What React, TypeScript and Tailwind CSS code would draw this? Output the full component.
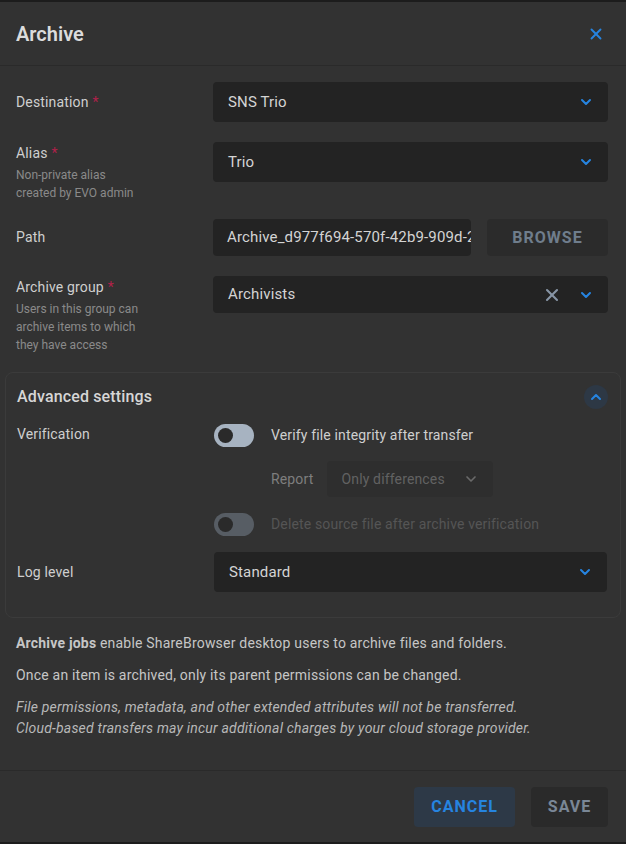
import { ChevronDown, ChevronUp, X } from 'lucide-react'

const font = { fontFamily: 'Roboto, "Liberation Sans", sans-serif' }

function Required() {
  return <span className="ml-1 text-[#b0214a]">*</span>
}

function SelectBox({ value, clearable, tall = true }: { value: string; clearable?: boolean; tall?: boolean }) {
  return (
    <div
      className={`flex flex-1 items-center rounded-[4px] bg-[#232323] pl-[15px] pr-[14px] text-[15px] tracking-[0.15px] text-[#d4d4d4] ${
        tall ? 'h-10' : 'h-[37px]'
      }`}
    >
      <span className="flex-1">{value}</span>
      {clearable && <X className="mr-[16px] h-5 w-5 text-[#8795a5]" strokeWidth={2.5} />}
      <ChevronDown className="h-4 w-4 text-[#2684e0]" strokeWidth={3} />
    </div>
  )
}

function Toggle({ dim }: { dim?: boolean }) {
  return (
    <div
      className={`flex h-[23px] w-10 items-center rounded-full pl-[4px] ${
        dim ? 'bg-[#575d64]' : 'bg-[#a7b3c1]'
      }`}
    >
      <div className="h-[15px] w-[15px] rounded-full bg-[#2a2a2a]" />
    </div>
  )
}

export default function App() {
  return (
    <div className="h-[844px] w-[626px] bg-[#1c1c1c] pt-[2px]" style={font}>
      <div className="flex h-[840px] flex-col bg-[#323232]">
        <div className="flex h-[64px] items-center justify-between border-b border-[#2a2a2a] pl-4 pr-[18px]">
          <h1 className="text-[20px] font-semibold text-[#dcdcdc]">Archive</h1>
          <X className="mr-[3px] h-[18px] w-[18px] text-[#2684e0]" strokeWidth={2.5} />
        </div>

        <div className="flex flex-col pl-4 pr-[18px] pt-[16px]">
          <div className="flex items-center">
            <div className="w-[197px] text-[14px] tracking-[0.15px] text-[#cfcfcf]">
              Destination
              <Required />
            </div>
            <SelectBox value="SNS Trio" />
          </div>

          <div className="mt-5 flex items-start">
            <div className="w-[197px] pt-[1px]">
              <div className="text-[14px] tracking-[0.15px] text-[#cfcfcf]">
                Alias
                <Required />
              </div>
              <div className="mt-[2px] text-[12px] leading-[18px] text-[#8a8a8a]">
                Non-private alias
                <br />
                created by EVO admin
              </div>
            </div>
            <SelectBox value="Trio" />
          </div>

          <div className="mt-[17px] flex items-center">
            <div className="w-[197px] text-[14px] tracking-[0.15px] text-[#cfcfcf]">Path</div>
            <div className="flex h-[37px] w-[258px] items-center overflow-hidden whitespace-nowrap rounded-[4px] bg-[#232323] pl-[14px] pr-1 text-[15px] tracking-[0.15px] text-[#d4d4d4]">
              Archive_d977f694-570f-42b9-909d-2c1
            </div>
            <button className="ml-4 flex h-[37px] flex-1 items-center justify-center rounded-[4px] bg-[#2b2b2b] text-[16px] font-bold tracking-[1px] text-[#6f7d8c]">
              BROWSE
            </button>
          </div>

          <div className="mt-5 flex items-start">
            <div className="w-[197px] pt-[1px]">
              <div className="text-[14px] tracking-[0.15px] text-[#cfcfcf]">
                Archive group
                <Required />
              </div>
              <div className="mt-[2px] text-[12px] leading-[18px] text-[#8a8a8a]">
                Users in this group can
                <br />
                archive items to which
                <br />
                they have access
              </div>
            </div>
            <SelectBox value="Archivists" clearable tall={false} />
          </div>
        </div>

        <div className="mx-[5px] mt-[18px] rounded-[8px] border border-[#3b3b3b] pb-[25px] pl-[11px] pr-[13px] pt-[12px]">
          <div className="flex items-center justify-between">
            <h2 className="text-[16px] font-medium tracking-[0.15px] text-[#d6d6d6]">Advanced settings</h2>
            <div className="mr-[-1px] flex h-6 w-6 items-center justify-center rounded-full bg-[#2d3845]">
              <ChevronUp className="h-4 w-4 text-[#2684e0]" strokeWidth={3} />
            </div>
          </div>

          <div className="mt-[15px] flex items-start">
            <div className="w-[197px] text-[14px] tracking-[0.15px] text-[#cfcfcf]">Verification</div>
            <div className="flex flex-col">
              <div className="flex items-center">
                <Toggle />
                <span className="ml-[17px] text-[14px] tracking-[0.15px] text-[#cfcfcf]">
                  Verify file integrity after transfer
                </span>
              </div>
              <div className="mt-[14px] flex items-center pl-[57px]">
                <span className="text-[14px] tracking-[0.15px] text-[#7e7e7e]">Report</span>
                <div className="ml-[14px] flex h-[36px] w-[166px] items-center rounded-[4px] bg-[#2e2e2e] pl-[14px] pr-[14px] text-[14px] tracking-[0.15px] text-[#626262]">
                  <span className="flex-1">Only differences</span>
                  <ChevronDown className="h-4 w-4 text-[#6a6a6a]" strokeWidth={2.5} />
                </div>
              </div>
              <div className="mt-[16px] flex items-center">
                <Toggle dim />
                <span className="ml-[17px] text-[14px] tracking-[0.15px] text-[#555555]">
                  Delete source file after archive verification
                </span>
              </div>
            </div>
          </div>

          <div className="mt-[16px] flex items-center">
            <div className="w-[197px] text-[14px] tracking-[0.15px] text-[#cfcfcf]">Log level</div>
            <SelectBox value="Standard" />
          </div>
        </div>

        <div className="flex flex-col gap-[11px] px-4 pt-[15px] text-[14px] leading-[21px] tracking-[0.2px] text-[#c6c6c6]">
          <p>
            <span className="font-bold">Archive jobs</span> enable ShareBrowser desktop users to
            archive files and folders.
          </p>
          <p>Once an item is archived, only its parent permissions can be changed.</p>
          <p className="italic text-[#b8b8b8]">
            File permissions, metadata, and other extended attributes will not be transferred.
            <br />
            Cloud-based transfers may incur additional charges by your cloud storage provider.
          </p>
        </div>

        <div className="mt-auto flex h-[72px] items-center justify-end gap-4 border-t border-[#2a2a2a] px-[18px]">
          <button className="h-10 w-[101px] rounded-[4px] bg-[#2d3947] text-[16px] font-bold tracking-[1px] text-[#2684e0]">
            CANCEL
          </button>
          <button className="h-10 w-[77px] rounded-[4px] bg-[#2a2a2a] text-[16px] font-bold tracking-[1px] text-[#7a8796]">
            SAVE
          </button>
        </div>
      </div>
    </div>
  )
}
